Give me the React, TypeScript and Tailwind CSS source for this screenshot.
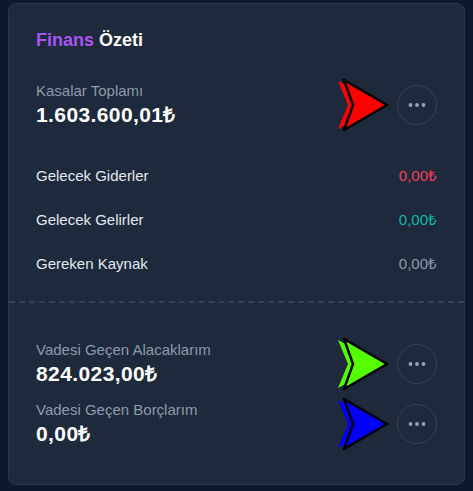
const font = { fontFamily: '"Liberation Sans", Arial, sans-serif' };

function Pointer({ color }: { color: string }) {
  return (
    <svg width="52" height="52" viewBox="0 0 52 52" className="-my-[2px] shrink-0">
      <polygon points="1,2 45,26 1,50 11,26" fill={color} />
      <polygon
        points="7,1 50,26 7,51 16,26"
        fill={color}
        stroke="#000"
        strokeWidth="2.5"
        strokeLinejoin="miter"
      />
    </svg>
  );
}

function MoreButton() {
  return (
    <button
      type="button"
      className="flex h-10 w-10 shrink-0 items-center justify-center rounded-full border border-[#334155]"
    >
      <svg width="18" height="6" viewBox="0 0 18 6">
        <circle cx="2.5" cy="3" r="1.9" fill="#94a3b8" />
        <circle cx="9" cy="3" r="1.9" fill="#94a3b8" />
        <circle cx="15.5" cy="3" r="1.9" fill="#94a3b8" />
      </svg>
    </button>
  );
}

function Stat({
  label,
  value,
  pointer,
}: {
  label: string;
  value: string;
  pointer: string;
}) {
  return (
    <div className="flex items-center">
      <div className="min-w-0 flex-1">
        <p className="text-[15px] leading-5 text-[#8e9aab]">{label}</p>
        <p className="text-[21px] font-bold leading-7 tracking-[0.4px] text-white">{value}</p>
      </div>
      <Pointer color={pointer} />
      <div className="w-[8px]" />
      <MoreButton />
    </div>
  );
}

const rows = [
  { label: "Gelecek Giderler", value: "0,00₺", color: "text-[#f43f5e]" },
  { label: "Gelecek Gelirler", value: "0,00₺", color: "text-[#14b8a6]" },
  { label: "Gereken Kaynak", value: "0,00₺", color: "text-[#8e9aab]" },
];

export default function App() {
  return (
    <div className="min-h-[491px] bg-[#0f172a] px-2 pt-[3px] pb-2" style={font}>
      <section className="rounded-lg border border-[#2b3648] bg-[#1e293b]">
        <div className="px-[27px] pt-[22px] pb-[15px]">
          <h2 className="text-lg font-bold leading-7 text-white">
            <span className="text-[#a855f7]">Finans</span> Özeti
          </h2>
          <div className="mt-[27px]">
            <Stat label="Kasalar Toplamı" value="1.603.600,01₺" pointer="#ff0000" />
          </div>
          <div className="mt-[25px]">
            {rows.map((row) => (
              <div key={row.label} className="flex h-[44px] items-center justify-between">
                <span className="text-[15px] text-[#e2e8f0]">{row.label}</span>
                <span className={`text-[15px] ${row.color}`}>{row.value}</span>
              </div>
            ))}
          </div>
        </div>
        <div className="border-t-2 border-dashed border-[#334155]" />
        <div className="space-y-3 px-[27px] pt-[37px] pb-[36px]">
          <Stat label="Vadesi Geçen Alacaklarım" value="824.023,00₺" pointer="#55ff00" />
          <Stat label="Vadesi Geçen Borçlarım" value="0,00₺" pointer="#0000ff" />
        </div>
      </section>
    </div>
  );
}
